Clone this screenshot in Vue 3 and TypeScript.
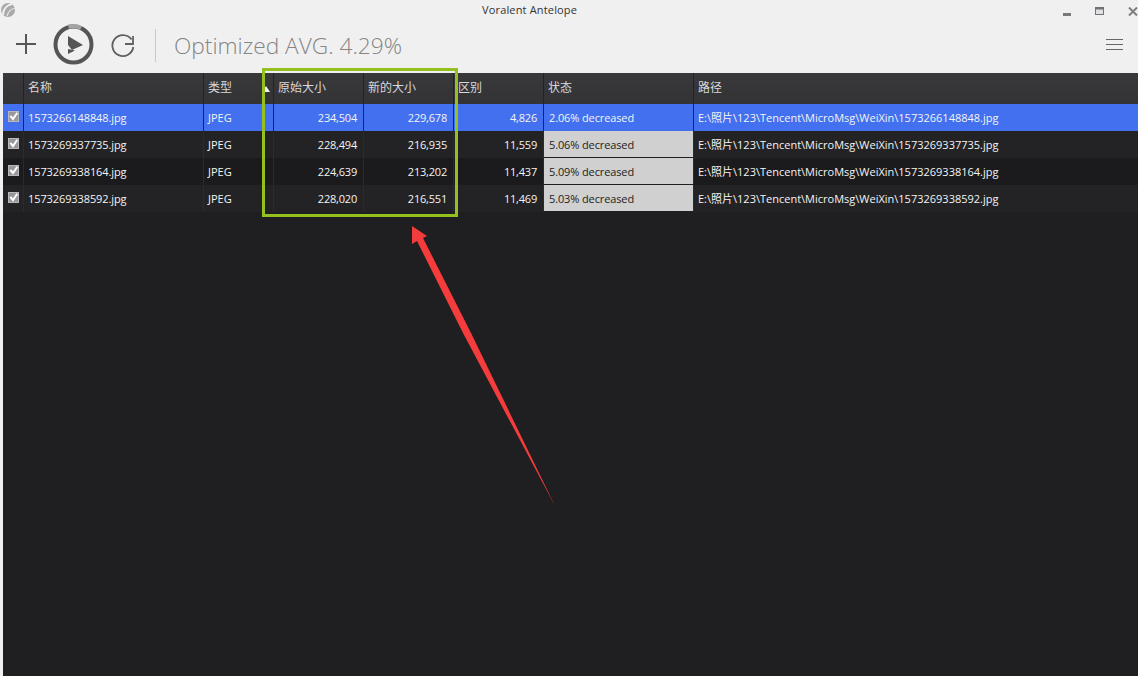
<script setup lang="ts">
interface Row { name: string; orig: string; next: string; diff: string; status: string; path: string }
const rows: Row[] = [
  { name: '1573266148848.jpg', orig: '234,504', next: '229,678', diff: '4,826', status: '2.06% decreased', path: 'E:\\照片\\123\\Tencent\\MicroMsg\\WeiXin\\1573266148848.jpg' },
  { name: '1573269337735.jpg', orig: '228,494', next: '216,935', diff: '11,559', status: '5.06% decreased', path: 'E:\\照片\\123\\Tencent\\MicroMsg\\WeiXin\\1573269337735.jpg' },
  { name: '1573269338164.jpg', orig: '224,639', next: '213,202', diff: '11,437', status: '5.09% decreased', path: 'E:\\照片\\123\\Tencent\\MicroMsg\\WeiXin\\1573269338164.jpg' },
  { name: '1573269338592.jpg', orig: '228,020', next: '216,551', diff: '11,469', status: '5.03% decreased', path: 'E:\\照片\\123\\Tencent\\MicroMsg\\WeiXin\\1573269338592.jpg' },
]
const heads = ['名称', '类型', '原始大小', '新的大小', '区别', '状态', '路径']
</script>

<template>
  <div class="app">
    <header class="titlebar">
      <svg class="logo" width="16" height="16" viewBox="0 0 16 16">
        <circle cx="8" cy="8" r="7" fill="#a9a9a9" />
        <path d="M3 13C3 7 7 3 12 2" stroke="#f0f0f0" stroke-width="2" fill="none" />
        <path d="M7 14C8 10 11 7 15 6" stroke="#e4e4e4" stroke-width="1.2" fill="none" />
      </svg>
      <span class="title">Voralent Antelope</span>
      <div class="winctl">
        <svg width="8" height="3" viewBox="0 0 8 3"><rect width="8" height="3" fill="#77797c" /></svg>
        <svg width="9" height="8" viewBox="0 0 9 8"><rect x=".5" y=".5" width="8" height="7" fill="#dfe0e2" stroke="#707275" /><rect width="9" height="2.5" fill="#707275" /></svg>
        <svg width="10" height="9" viewBox="0 0 10 9"><path d="M1 .5 9 8.500M9 .5 1 8.500" stroke="#7c7e82" stroke-width="2" /></svg>
      </div>
    </header>
    <div class="toolbar">
      <svg class="t-plus" width="22" height="22" viewBox="0 0 22 22"><path d="M11 1v20M1 11h20" stroke="#555" stroke-width="2" fill="none" /></svg>
      <svg class="t-play" width="42" height="42" viewBox="0 0 42 42">
        <circle cx="20.500" cy="21.500" r="18" fill="none" stroke="#555" stroke-width="4" />
        <path d="M15.500 3.700A18 18 0 0 1 28 5" fill="none" stroke="#a4a4a4" stroke-width="4" />
        <path d="M15 13 30 22 19 27 15 22Z" fill="#555" />
        <path d="M15 26 22 27.500 15 31Z" fill="#555" />
      </svg>
      <svg class="t-redo" width="24" height="24" viewBox="0 0 24 24">
        <path d="M20.500 6.500A10.500 10.500 0 1 0 22.300 14" fill="none" stroke="#606060" stroke-width="1.800" />
        <path d="M22 3v8h-8" fill="none" stroke="#606060" stroke-width="1.800" />
      </svg>
      <span class="sep"></span>
      <span class="avg">Optimized AVG. 4.29%</span>
      <svg class="menu" width="17" height="11" viewBox="0 0 17 11"><path d="M0 .5h17M0 5.500h17M0 10.500h17" stroke="#666" stroke-width="1" /></svg>
    </div>
    <main class="table">
      <div class="row head">
        <div class="cell check"></div>
        <div v-for="h in heads" :key="h" class="cell">{{ h }}</div>
      </div>
      <div v-for="(r, i) in rows" :key="r.name" class="row body" :class="{ sel: i === 0, alt: i === 2 }">
        <div class="cell check">
          <svg width="11" height="11" viewBox="0 0 11 11">
            <rect width="11" height="11" fill="#b8b8bc" />
            <rect x="1" y="1" width="9" height="9" fill="#98989c" />
            <path d="M2.300 4.800 5 8 9.300 1.800" fill="none" stroke="#fff" stroke-width="2" />
          </svg>
        </div>
        <div class="cell tight">{{ r.name }}</div>
        <div class="cell">JPEG</div>
        <div class="cell num">{{ r.orig }}</div>
        <div class="cell num">{{ r.next }}</div>
        <div class="cell num">{{ r.diff }}</div>
        <div class="cell status" :class="{ light: i !== 0 }">{{ r.status }}</div>
        <div class="cell">{{ r.path }}</div>
      </div>
      <span class="sort"></span>
    </main>
    <div class="highlight"></div>
    <svg class="arrow" width="160" height="290" viewBox="0 0 160 290">
      <path d="M2 6 2 24 7 21 53 113 145 286 61 113 13 18 17 16Z" fill="#f43c3c" />
    </svg>
  </div>
</template>

<style scoped>
.app {
  position: relative;
  width: 1138px;
  height: 676px;
  overflow: hidden;
  background: #f0f0f0;
  display: flex;
  flex-direction: column;
  font-family: "Open Sans", "Noto Sans CJK SC", sans-serif;
  font-size: 11px;
}
.titlebar {
  position: relative;
  height: 20px;
  flex: none;
}
.logo {
  position: absolute;
  left: 0;
  top: 2px;
}
.title {
  position: absolute;
  left: 482px;
  top: 2px;
  font-size: 11px;
  letter-spacing: .16px;
  line-height: 15px;
  color: #333;
}
.winctl {
  position: absolute;
  left: 1063px;
  top: 7px;
  width: 75px;
  display: flex;
  gap: 24px;
  align-items: flex-start;
}
.winctl svg:first-child { margin-top: 6px; }
.toolbar {
  height: 48px;
  flex: none;
  display: flex;
  align-items: center;
  padding-left: 15px;
  margin-bottom: 5px;
}
.t-play { margin-left: 16px; }
.t-redo { margin-left: 16px; margin-top: 2px; }
.sep {
  width: 1px;
  height: 33px;
  background: #c9c9c9;
  margin-left: 20px;
  margin-top: 3px;
}
.avg {
  margin-left: 18px;
  margin-top: 4px;
  font-size: 22.700px;
  font-weight: 300;
  line-height: 30px;
  color: #858585;
}
.menu {
  margin-left: auto;
  margin-right: 15px;
  margin-top: 1px;
}
.table {
  position: relative;
  flex: 1;
  margin-left: 3px;
  background: #1f1f21;
  color: #f4f4f4;
}
.row {
  display: grid;
  grid-template-columns: 21px 180px 70px 90px 90px 90px 150px 444px;
}
.head {
  height: 31px;
  background: linear-gradient(#39393c, #333336);
  color: #d8d8d8;
  font-size: 12px;
}
.head .cell {
  padding-left: 4px;
  padding-bottom: 1px;
  line-height: 16px;
  border-right: 1px solid #232325;
}
.body {
  height: 27px;
  background: #232325;
}
.body.sel { background: #4270ee; }
.body.alt { background: #1b1b1d; }
.body.sel .cell { border-right-color: #16264f; }
.cell {
  display: flex;
  align-items: center;
  border-right: 1px solid #2b2b2d;
  padding-left: 4px;
  line-height: 15px;
  white-space: nowrap;
  overflow: hidden;
  box-sizing: border-box;
}
.head .cell:last-child, .body .cell:last-child { border-right: none; }
.check {
  padding: 0;
  justify-content: center;
  padding-bottom: 2px;
}
.tight { letter-spacing: -.1px; }
.num {
  justify-content: flex-end;
  padding-right: 6px;
  letter-spacing: -.2px;
}
.status {
  padding-left: 5px;
  letter-spacing: -.12px;
}
.status.light {
  background: #d0d0d0;
  color: #222;
  border-bottom: 1px solid #1f1f21;
}
.sort {
  position: absolute;
  left: 259px;
  top: 13px;
  width: 0;
  height: 0;
  border-left: 4px solid transparent;
  border-right: 4px solid transparent;
  border-bottom: 6px solid #f4f4f4;
}
.highlight {
  position: absolute;
  left: 262px;
  top: 68px;
  width: 196px;
  height: 149px;
  box-sizing: border-box;
  border: 3px solid #95c11f;
}
.arrow {
  position: absolute;
  left: 410px;
  top: 220px;
}
</style>
